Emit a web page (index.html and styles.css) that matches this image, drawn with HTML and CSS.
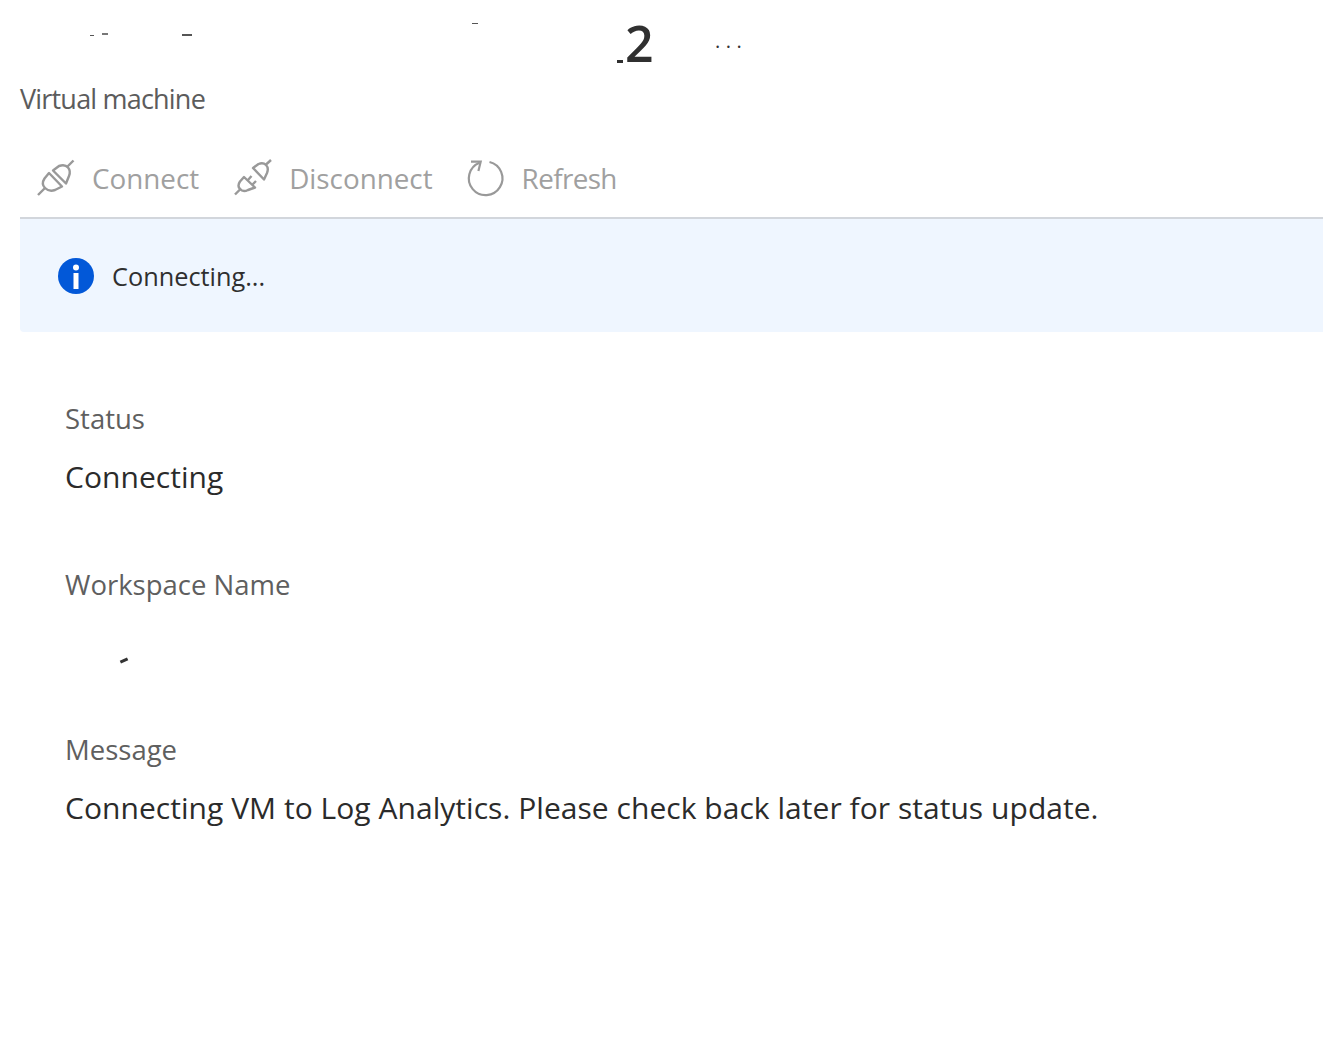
FILE: index.html
```html
<!DOCTYPE html>
<html lang="en">
<head>
    <meta charset="UTF-8">
    <title>Virtual machine</title>
    <link rel="stylesheet" href="styles.css">
</head>
<body>
    <div class="page">
        <div class="title-row">
            <h1 class="title">2</h1>
            <span class="more">...</span>
            <!-- leftovers of the blanked out name -->
            <i class="mark mark-a"></i>
            <i class="mark mark-b"></i>
            <i class="mark mark-c"></i>
            <i class="mark mark-d"></i>
            <i class="mark mark-e"></i>
        </div>
        <div class="subtitle">Virtual machine</div>

        <div class="toolbar">
            <div class="tool tool-connect">
                <svg class="tool-icon" viewBox="0 0 44 44" fill="none" stroke="#999" stroke-width="2.4" stroke-linejoin="round">
                    <path d="M4 39 L11.5 31.5"/>
                    <path d="M15 17 L10.5 22.5 Q7 28 11 32 Q15 36 21 34 L28 30.5 Z"/>
                    <path d="M19 14.5 L25 10 Q31 8 34 11.5 Q37 15 35 20 L32 27.5 Z"/>
                    <path d="M33 11 L39.5 4.5"/>
                </svg>
                <span>Connect</span>
            </div>
            <div class="tool tool-disconnect">
                <svg class="tool-icon" viewBox="0 0 44 44" fill="none" stroke="#999" stroke-width="2.4" stroke-linejoin="round">
                    <path d="M4 38.5 L10 32.5"/>
                    <path d="M13 21 L9 25.5 Q6 30 9 33 Q12 36.5 17 34 L24 31.5 Z"/>
                    <path d="M16.5 24.5 L20.5 20 M21 29 L25 25"/>
                    <path d="M22 12 L27.5 8 Q32 6 35 9 Q38 12 36 17 L33 23.5 Z"/>
                    <path d="M34.5 9 L40 4"/>
                </svg>
                <span>Disconnect</span>
            </div>
            <div class="tool tool-refresh">
                <svg class="tool-icon" viewBox="0 0 44 44" fill="none" stroke="#999" stroke-width="2.2">
                    <path d="M25.5 6 A16.8 16.8 0 1 1 15.5 6.7"/>
                    <path d="M7 5.7 L16.7 5.7 L14.4 15"/>
                </svg>
                <span>Refresh</span>
            </div>
        </div>

        <div class="banner">
            <svg class="banner-icon" viewBox="0 0 36 36">
                <circle cx="18" cy="18" r="18" fill="#0258d8"/>
                <circle cx="18" cy="9.5" r="3" fill="#fff"/>
                <rect x="15.5" y="15" width="5" height="16" fill="#fff"/>
            </svg>
            <span>Connecting...</span>
        </div>

        <div class="fields">
            <div class="field field-first">
                <div class="field-label">Status</div>
                <div class="field-value">Connecting</div>
            </div>
            <div class="field">
                <div class="field-label">Workspace Name</div>
                <div class="field-value"><i class="mark mark-f"></i>&nbsp;</div>
            </div>
            <div class="field">
                <div class="field-label">Message</div>
                <div class="field-value">Connecting VM to Log Analytics. Please check back later for status update.</div>
            </div>
        </div>
    </div>
</body>
</html>
```

FILE: styles.css
```css
* {
    margin: 0;
    padding: 0;
    box-sizing: border-box;
}

body {
    font-family: "Open Sans", "Noto Sans", sans-serif;
    background-color: #fff;
    color: #2b2b2b;
}

.page {
    padding-left: 20px;
    height: 1044px;
    overflow: hidden;
}

.title-row {
    position: relative;
    height: 82px;
}

.title {
    position: absolute;
    left: 605px;
    top: 9px;
    font-size: 50px;
    line-height: 68px;
    font-weight: 600;
    color: #303030;
}

.more {
    position: absolute;
    left: 695px;
    top: 28px;
    font-size: 20px;
    letter-spacing: 5.5px;
    line-height: 26px;
    color: #333;
}

.mark {
    position: absolute;
    display: block;
    background-color: #555;
}

.mark-a { left: 70px; top: 35px; width: 4px; height: 1px; }
.mark-b { left: 82px; top: 33px; width: 6px; height: 2px; background-color: #777; }
.mark-c { left: 162px; top: 34px; width: 10px; height: 2px; }
.mark-d { left: 452px; top: 23px; width: 6px; height: 1px; }
.mark-e { left: 597px; top: 60px; width: 6px; height: 3px; background-color: #303030; }

.subtitle {
    font-size: 27px;
    line-height: 34px;
    letter-spacing: -0.8px;
    color: #5c5c5c;
}

.toolbar {
    display: flex;
    align-items: center;
    height: 103px;
    padding-top: 22px;
    border-bottom: 2px solid #d2d6dc;
}

.tool {
    display: flex;
    align-items: center;
    gap: 14px;
    font-size: 27.8px;
    color: #a0a0a0;
}

.tool-connect {
    margin-left: 14px;
}

.tool-disconnect {
    margin-left: 32px;
}

.tool-refresh {
    margin-left: 31px;
    letter-spacing: -0.6px;
}

.tool-icon {
    width: 44px;
    height: 44px;
}

.banner {
    display: flex;
    align-items: center;
    gap: 18px;
    height: 113px;
    padding-left: 38px;
    background-color: #eff6ff;
    border-radius: 0 0 0 4px;
    font-size: 25.3px;
    color: #2f2f2f;
}

.banner-icon {
    width: 36px;
    height: 36px;
}

.fields {
    padding: 70px 0 0 45px;
}

.field {
    height: 165px;
}

.field-first {
    height: 166px;
}

.field-label {
    font-size: 27.5px;
    line-height: 34px;
    color: #5f5f5f;
}

.field-value {
    position: relative;
    margin-top: 21px;
    font-size: 30px;
    line-height: 40px;
    letter-spacing: 0.04px;
    color: #2b2b2b;
}

.mark-f {
    left: 55px;
    top: 36px;
    width: 8px;
    height: 3px;
    background-color: #333;
    transform: rotate(-25deg);
}
```
